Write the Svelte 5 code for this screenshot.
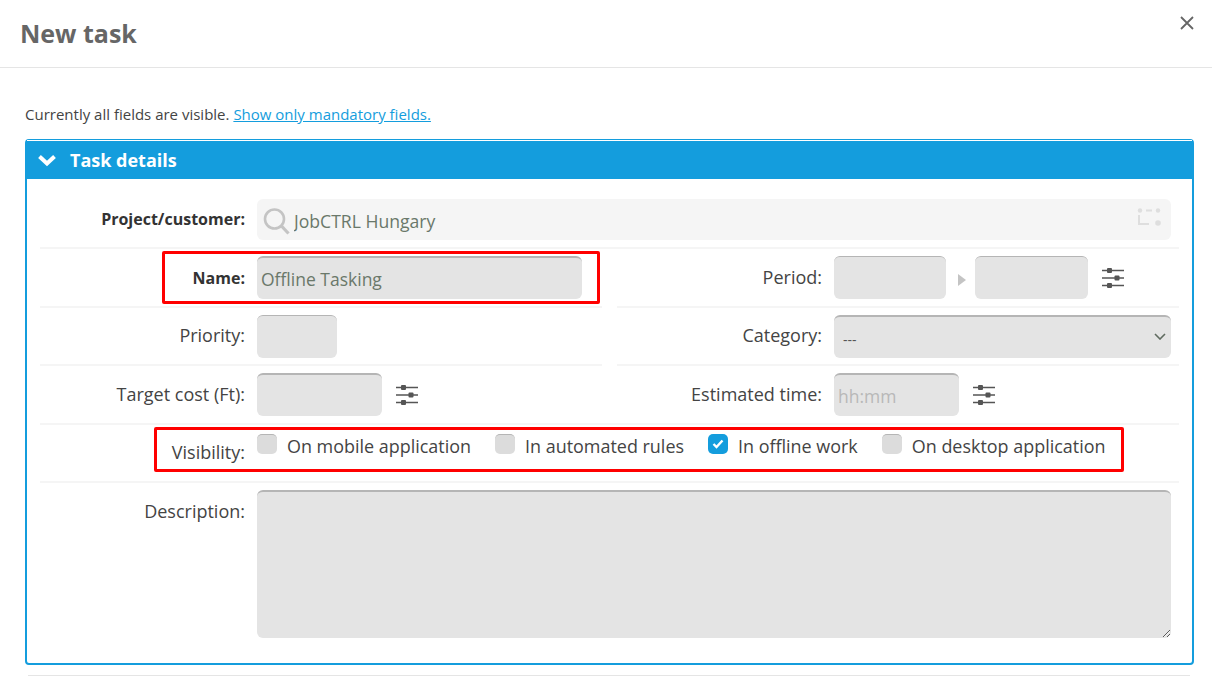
<script>
	const visibility = [
		{ label: "On mobile application", checked: false },
		{ label: "In automated rules", checked: false },
		{ label: "In offline work", checked: true },
		{ label: "On desktop application", checked: false },
	];
</script>

{#snippet sliders()}
	<svg class="sliders" width="24" height="24" viewBox="0 0 24 24">
		<path d="M1 4.5h22M1 12h22M1 19.5h22" stroke="#555" stroke-width="1.6" fill="none" />
		<rect x="6" y="2" width="5" height="5" rx="1" fill="#555" />
		<rect x="13.5" y="9.5" width="5" height="5" rx="1" fill="#555" />
		<rect x="6" y="17" width="5" height="5" rx="1" fill="#555" />
	</svg>
{/snippet}

<div class="dialog">
	<header>
		<h1>New task</h1>
		<button class="close" aria-label="Close">
			<svg width="14" height="14" viewBox="0 0 14 14">
				<path d="M1 1l12 12M13 1L1 13" stroke="#666" stroke-width="1.8" fill="none" />
			</svg>
		</button>
	</header>

	<div class="content">
		<p class="note">Currently all fields are visible. <a href="#top">Show only mandatory fields.</a></p>

		<section class="panel">
			<div class="panel-head">
				<svg width="20" height="14" viewBox="0 0 20 14">
					<path d="M2.5 3.5L10 10.5l7.5-7" stroke="#fff" stroke-width="4" fill="none" />
				</svg>
				<span>Task details</span>
			</div>

			<div class="panel-body">
				<div class="row first">
					<label class="lbl bold" for="project">Project/customer:</label>
					<div class="search">
						<svg width="28" height="28" viewBox="0 0 28 28">
							<circle cx="12.500" cy="12" r="9.500" stroke="#c4c4c4" stroke-width="2.600" fill="none" />
							<path d="M19.500 19l7 7.500" stroke="#c4c4c4" stroke-width="3.200" fill="none" />
						</svg>
						<input id="project" value="JobCTRL Hungary" readonly />
						<svg class="tree" width="24" height="20" viewBox="0 0 24 20">
							<path d="M2 8v9h10M9 3.500h6" stroke="#dedede" stroke-width="2" fill="none" />
							<circle cx="3" cy="3.500" r="2.200" fill="#dedede" />
							<circle cx="21" cy="3.500" r="2.200" fill="#dedede" />
							<circle cx="21" cy="16" r="2.800" fill="#dedede" />
						</svg>
					</div>
				</div>

				<div class="split">
					<div class="row half">
						<label class="lbl bold" for="name">Name:</label>
						<input id="name" class="field name" value="Offline Tasking" readonly />
					</div>
					<div class="row half">
						<label class="lbl" for="from">Period:</label>
						<input id="from" class="field date" readonly />
						<span class="arrow"></span>
						<input class="field date second" aria-label="Period end" readonly />
						<span class="tune">{@render sliders()}</span>
					</div>
				</div>

				<div class="split compact">
					<div class="row half">
						<label class="lbl" for="priority">Priority:</label>
						<input id="priority" class="field priority" readonly />
					</div>
					<div class="row half">
						<label class="lbl" for="category">Category:</label>
						<div class="select-wrap">
							<select id="category" class="field category">
								<option>---</option>
							</select>
							<svg width="12" height="7" viewBox="0 0 12 7">
								<path d="M1 1l5 5 5-5" stroke="#5f6b5f" stroke-width="1.600" fill="none" />
							</svg>
						</div>
					</div>
				</div>

				<div class="row">
					<div class="half-fixed">
						<label class="lbl" for="cost">Target cost (Ft):</label>
						<input id="cost" class="field cost" readonly />
						<span class="tune">{@render sliders()}</span>
					</div>
					<div class="half-fixed right">
						<label class="lbl" for="time">Estimated time:</label>
						<input id="time" class="field time" placeholder="hh:mm" readonly />
						<span class="tune">{@render sliders()}</span>
					</div>
				</div>

				<div class="row visibility">
					<span class="lbl vis-lbl">Visibility:</span>
					<div class="checks">
						{#each visibility as item}
							<label class="check">
								<span class="box" class:on={item.checked}>
									{#if item.checked}
										<svg width="12" height="10" viewBox="0 0 12 10">
											<path d="M1.500 5l3 3 6-6.500" stroke="#fff" stroke-width="2.400" fill="none" />
										</svg>
									{/if}
								</span>
								{item.label}
							</label>
						{/each}
					</div>
				</div>

				<div class="row last">
					<label class="lbl" for="description">Description:</label>
					<textarea id="description" class="field description" readonly></textarea>
				</div>

				<div class="mark mark-name"></div>
				<div class="mark mark-visibility"></div>
			</div>
		</section>

		<div class="next"></div>
	</div>
</div>

<style>
	:global(body) {
		overflow: hidden;
		background: #fff;
	}

	.dialog {
		height: 676px;
		overflow: hidden;
		font-family: "Open Sans", sans-serif;
		font-size: 16px;
		color: #444;
	}

	header {
		height: 67px;
		border-bottom: 1px solid #e5e5e5;
		display: flex;
		justify-content: space-between;
		padding: 0 18px 0 20px;
	}

	h1 {
		margin: 17px 0 0;
		font-size: 25px;
		line-height: 33px;
		font-weight: 700;
		color: #666;
	}

	.close {
		background: none;
		border: 0;
		padding: 0;
		height: 14px;
		margin-top: 16px;
	}

	.content {
		padding: 0 18px 0 25px;
	}

	.note {
		margin: 36px 0 15px;
		font-size: 15px;
		line-height: 20px;
		color: #444;
	}

	.note a {
		color: #149ddd;
	}

	.panel {
		border: 2px solid #149ddd;
		border-top-width: 1px;
		border-radius: 4px;
		height: 526px;
		box-sizing: border-box;
	}

	.panel-head {
		height: 39px;
		background: #149ddd;
		border-top: 1px solid #fff;
		box-sizing: border-box;
		display: flex;
		align-items: center;
		gap: 13px;
		padding-left: 10px;
		color: #fff;
		font-size: 18px;
		font-weight: 700;
	}

	.panel-body {
		position: relative;
		padding: 10px 13px 0;
	}

	.row {
		display: flex;
		height: 58.500px;
		box-sizing: border-box;
		padding-top: 7px;
		border-bottom: 2px solid #f5f5f5;
	}

	.row.first {
		padding-top: 10px;
		height: 60px;
	}

	.row.last {
		border-bottom: 0;
		height: auto;
	}

	.split {
		display: flex;
		justify-content: space-between;
	}

	.half {
		width: 562px;
	}

	.half-fixed {
		display: flex;
		width: 577px;
	}

	.half-fixed.right {
		width: 562px;
	}

	.lbl {
		width: 205px;
		flex: none;
		text-align: right;
		margin-right: 12px;
		font-size: 18px;
		line-height: 43px;
		color: #444;
	}

	.compact .lbl {
		line-height: 41px;
	}

	.bold {
		font-size: 16px;
		line-height: 45px;
		font-weight: 700;
		color: #333;
	}

	.first .bold {
		line-height: 41px;
	}

	.search {
		display: flex;
		align-items: center;
		flex: none;
		width: 914px;
		height: 41px;
		box-sizing: border-box;
		padding: 2px 10px 0 5px;
		border-radius: 6px;
		background: #f5f5f5;
	}

	.search input {
		flex: 1;
		min-width: 0;
		border: 0;
		outline: 0;
		padding: 0 0 0 4px;
		background: none;
		font: inherit;
		font-size: 17.600px;
		color: #6a786a;
	}

	.tree {
		margin-top: -7px;
	}

	.field {
		flex: none;
		height: 43px;
		box-sizing: border-box;
		border: 0;
		border-top: 2px solid #b5b5b5;
		border-radius: 6px;
		outline: 0;
		background: #e4e4e4;
		font: inherit;
		font-size: 17.500px;
		color: #6a786a;
		padding: 0 4px;
		margin: 0;
	}

	.name {
		width: 325px;
	}

	.date {
		width: 112px;
		border-top-width: 1px;
	}

	.date.second {
		width: 113px;
	}

	.arrow {
		width: 0;
		height: 0;
		margin: 18px 9px 0 12px;
		border-left: 8px solid #c4c4c4;
		border-top: 6px solid transparent;
		border-bottom: 6px solid transparent;
	}

	.tune {
		display: block;
		margin: 10px 0 0 13px;
	}

	.sliders {
		display: block;
	}

	.priority {
		width: 80px;
		border-top-width: 1px;
	}

	.select-wrap {
		position: relative;
		flex: none;
	}

	.select-wrap svg {
		position: absolute;
		right: 5px;
		top: 18px;
		pointer-events: none;
	}

	.category {
		display: block;
		appearance: none;
		width: 337px;
		font-size: 14px;
		padding: 4px 4px 0 9px;
		color: #555;
	}

	.cost {
		width: 125px;
	}

	.time {
		width: 125px;
	}

	.time::placeholder {
		color: #b8b8b8;
		opacity: 1;
	}

	.vis-lbl {
		line-height: 41px;
	}

	.checks {
		display: flex;
		gap: 24px;
	}

	.check {
		display: flex;
		gap: 10px;
		height: 28px;
		font-size: 17.950px;
		line-height: 28px;
		color: #444;
	}

	.box {
		width: 20px;
		height: 20px;
		margin-top: 2px;
		box-sizing: border-box;
		border-top: 1px solid #b5b5b5;
		border-radius: 5px;
		background: #dcdcdc;
		display: flex;
		align-items: center;
		justify-content: center;
	}

	.box.on {
		background: #149ddd;
		border-top: 0;
	}

	.description {
		width: 914px;
		height: 148px;
		resize: both;
		display: block;
	}

	.mark {
		position: absolute;
		box-sizing: border-box;
		border: 3px solid #f00;
		border-radius: 2px;
		pointer-events: none;
	}

	.mark-name {
		left: 135px;
		top: 72px;
		width: 438px;
		height: 53px;
	}

	.mark-visibility {
		left: 127px;
		top: 248px;
		width: 970px;
		height: 45px;
	}

	.next {
		margin: 10px 4px 0 3px;
		border-top: 1px solid #e5e5e5;
	}
</style>
